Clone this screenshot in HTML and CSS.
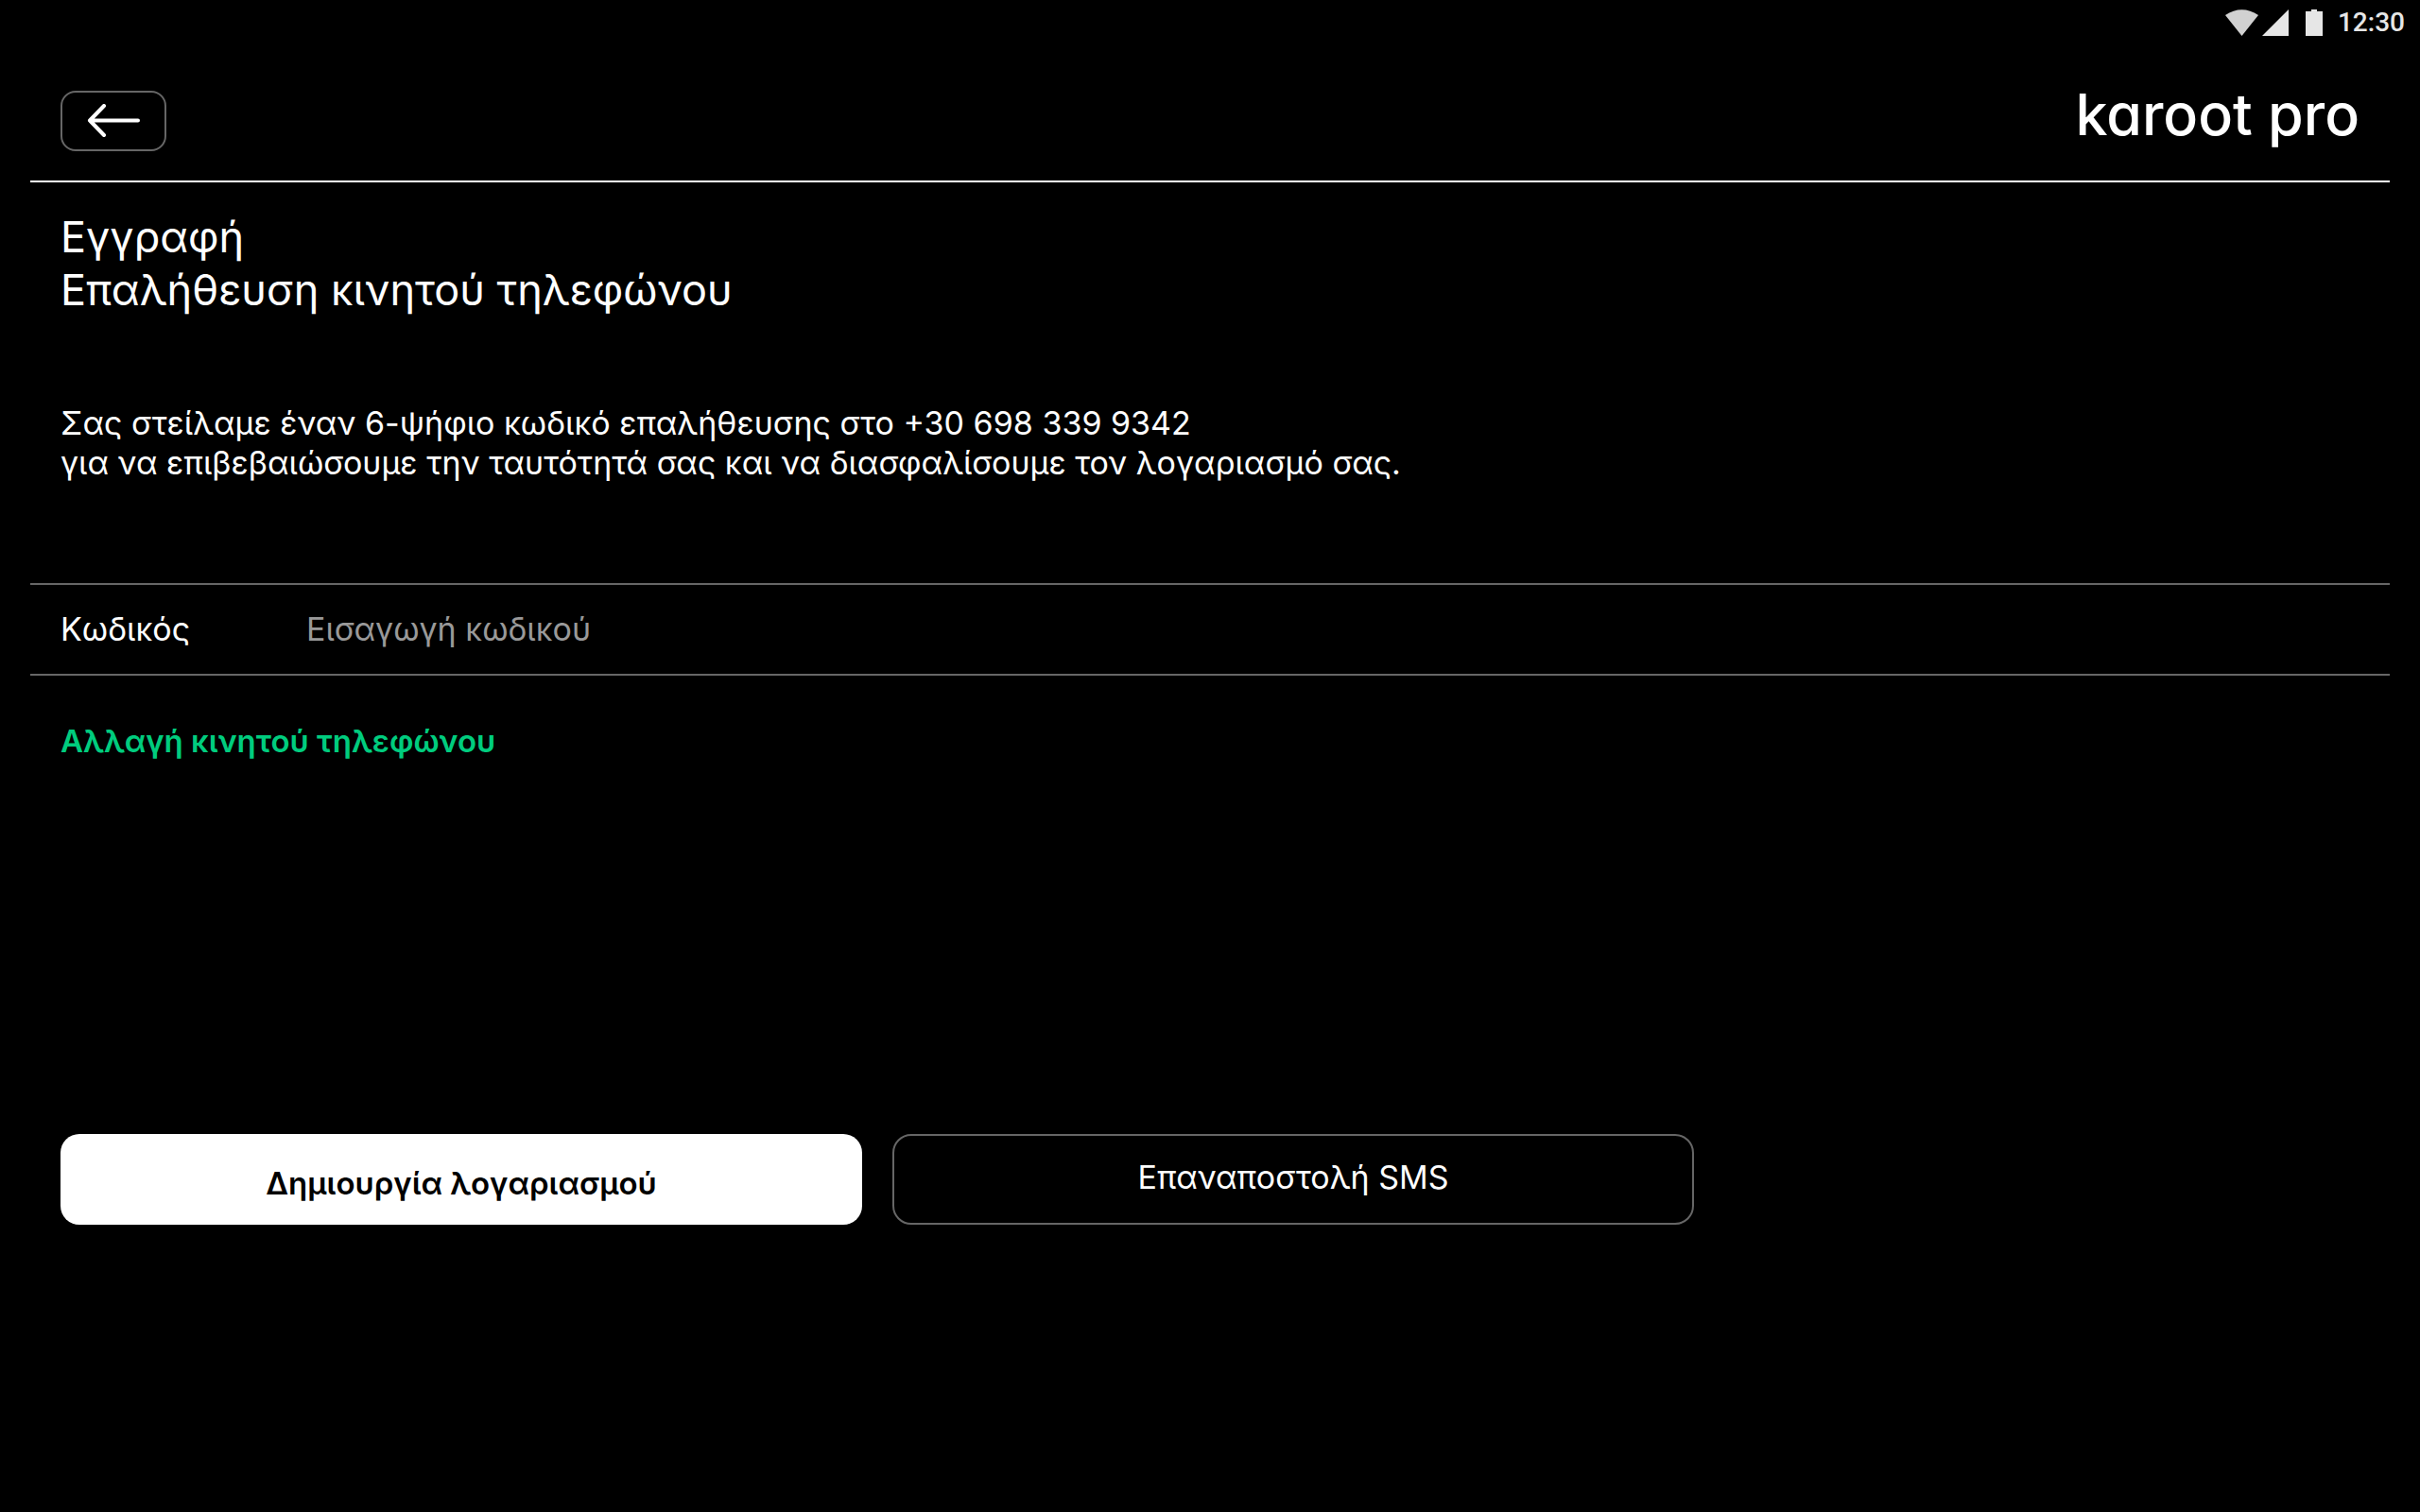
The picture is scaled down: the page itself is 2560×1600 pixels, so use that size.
FILE: index.html
```html
<!DOCTYPE html>
<html lang="el">
<head>
    <meta charset="utf-8">
    <title>karoot pro</title>
    <link rel="stylesheet" href="styles.css">
</head>
<body>
    <div class="status-bar">
        <svg class="status-icons" width="104" height="28" viewBox="0 0 104 28" aria-hidden="true">
            <path d="M0 6 Q17.500 -5.500 35 6 L17.500 28 Z" fill="#d1d1d1"/>
            <path d="M67 0 V28 H39 Z"/>
            <path d="M91 0 H97 V2 H103 V28 H85 V2 H91 Z"/>
        </svg>
        <span>12:30</span>
    </div>

    <header class="header">
        <button class="button-back" type="button" aria-label="Πίσω">
            <svg width="58" height="36" viewBox="0 0 58 36" aria-hidden="true">
                <path d="M55 17.500 H4 M19 2 L4 17.500 L19 33"/>
            </svg>
        </button>
        <div class="logo">karoot pro</div>
    </header>

    <main class="content">
        <h1 class="title">Εγγραφή<br>Επαλήθευση κινητού τηλεφώνου</h1>
        <p class="info">Σας στείλαμε έναν 6-ψήφιο κωδικό επαλήθευσης στο +30 698 339 9342<br>για να επιβεβαιώσουμε την ταυτότητά σας και να διασφαλίσουμε τον λογαριασμό σας.</p>

        <form id="verify" class="field">
            <label for="code">Κωδικός</label>
            <input type="text" id="code" placeholder="Εισαγωγή κωδικού">
        </form>

        <a class="change-link" href="#">Αλλαγή κινητού τηλεφώνου</a>

        <div class="actions">
            <button class="button button-primary" type="submit" form="verify">Δημιουργία λογαριασμού</button>
            <button class="button button-outline" type="button">Επαναποστολή SMS</button>
        </div>
    </main>
</body>
</html>
```
FILE: styles.css
```css
* {
    box-sizing: border-box;
}
body {
    margin: 0;
    background-color: #000;
    color: #fff;
    font-family: Inter, "Liberation Sans", sans-serif;
    font-size: 34px;
    line-height: 42px;
}
.status-bar {
    display: flex;
    justify-content: flex-end;
    align-items: center;
    gap: 15px;
    height: 48px;
    padding-right: 16px;
    color: #e6e6e6;
    font-family: Roboto, sans-serif;
    font-size: 28px;
    font-weight: 500;
}
.status-icons {
    fill: #e6e6e6;
}
.header {
    display: flex;
    justify-content: space-between;
    align-items: flex-start;
    height: 145px;
    margin: 0 32px;
    padding: 48px 32px 0;
    border-bottom: 2px solid #fff;
}
.button-back {
    display: flex;
    justify-content: center;
    align-items: center;
    width: 112px;
    height: 64px;
    padding: 0;
    background: none;
    border: 2px solid #666;
    border-radius: 16px;
    cursor: pointer;
}
.button-back path {
    fill: none;
    stroke: #fff;
    stroke-width: 4;
    stroke-linecap: round;
    stroke-linejoin: round;
}
.logo {
    font-size: 61px;
    font-weight: 500;
    line-height: 50px;
    font-feature-settings: "cv11";
}
.content {
    padding: 30px 32px;
}
.title {
    margin: 0 32px;
    font-size: 45px;
    font-weight: 400;
    line-height: 56px;
}
.info {
    margin: 92px 32px 0;
}
.field {
    display: flex;
    align-items: center;
    height: 98px;
    margin-top: 106px;
    padding: 0 32px;
    border-top: 2px solid #666;
    border-bottom: 2px solid #666;
}
.field label {
    width: 260px;
}
.field input {
    flex: 1;
    padding: 0;
    background: none;
    border: none;
    outline: none;
    color: #fff;
    font: inherit;
}
.field input::placeholder {
    color: #999;
    opacity: 1;
}
.change-link {
    display: inline-block;
    margin: 48px 32px 0;
    color: #00cc7e;
    font-size: 33px;
    font-weight: 600;
    text-decoration: none;
}
.actions {
    display: grid;
    grid-template-columns: 1fr 1fr;
    gap: 32px;
    max-width: 1728px;
    margin: 395px 32px 0;
}
.button {
    height: 96px;
    border-radius: 20px;
    font: inherit;
    cursor: pointer;
}
.button-primary {
    padding: 8px 0 0;
    background-color: #fff;
    border: none;
    color: #000;
    font-size: 33px;
    font-weight: 600;
}
.button-outline {
    padding: 0 0 4px;
    background: none;
    border: 2px solid #666;
    color: #fff;
}
```
